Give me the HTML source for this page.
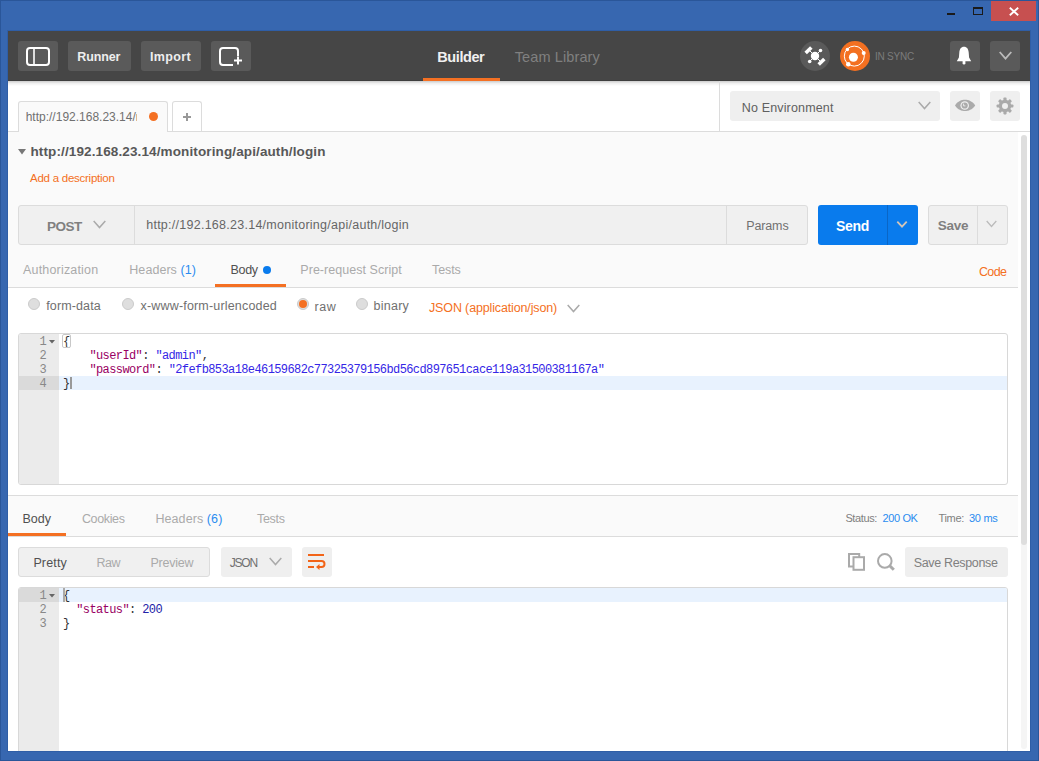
<!DOCTYPE html>
<html><head><meta charset="utf-8">
<style>
*{margin:0;padding:0;box-sizing:border-box}
html,body{width:1039px;height:761px;overflow:hidden;background:#3767b0;font-family:"Liberation Sans",sans-serif;position:relative}
.a{position:absolute}
.t{position:absolute;white-space:nowrap;line-height:1}
.mono{font-family:"Liberation Mono",monospace}
.tb{position:absolute;top:41px;height:30px;background:#5a5a5a;border-radius:3px}
.btn{position:absolute;background:#efefef;border-radius:3px}
.ln{position:absolute;background:#dcdcdc}
</style></head><body>
<div class="a" style="left:0;top:0;width:1039px;height:1px;background:#2a5699"></div>
<div class="a" style="left:0;top:0;width:1px;height:761px;background:#2a5699"></div>
<div class="a" style="left:1038px;top:0;width:1px;height:761px;background:#2a5699"></div>
<div class="a" style="left:7px;top:30px;width:1024px;height:722px;background:#2f5ea6"></div>
<div class="a" style="left:947px;top:13px;width:8px;height:2px;background:#1a1a1a"></div>
<div class="a" style="left:973px;top:7px;width:10px;height:8px;border:1px solid #1a1a1a;border-top-width:2px"></div>
<div class="a" style="left:991px;top:1px;width:45px;height:20px;background:#c75050"></div>
<svg class="a" style="left:1009px;top:7px" width="10" height="9" viewBox="0 0 10 9"><path d="M0.8 0.8L9.2 8.2M9.2 0.8L0.8 8.2" stroke="#fff" stroke-width="1.8"/></svg>
<div class="a" style="left:8px;top:31px;width:1022px;height:720px;background:#fff"></div>
<div class="a" style="left:8px;top:131px;width:1010px;height:156px;background:#fafafa"></div>
<div class="a" style="left:8px;top:495px;width:1010px;height:41px;background:#fafafa"></div>
<div class="a" style="left:8px;top:31px;width:1022px;height:50px;background:#464646"></div>
<div class="a" style="left:8px;top:80px;width:1022px;height:1px;background:#3e3e3e"></div>
<div class="a" style="left:8px;top:81px;width:1022px;height:5px;background:linear-gradient(rgba(0,0,0,0.2),rgba(0,0,0,0.06) 50%,rgba(0,0,0,0))"></div>
<div class="tb" style="left:18px;width:40px"></div>
<svg class="a" style="left:26px;top:47px" width="24" height="19" viewBox="0 0 24 19"><rect x="1" y="1" width="22" height="17" rx="3" fill="none" stroke="#fff" stroke-width="2"/><rect x="7" y="2" width="2" height="15" fill="#ddd"/></svg>
<div class="tb" style="left:68px;width:63px"></div>
<div class="tb" style="left:141px;width:60px"></div>
<div class="tb" style="left:211px;width:40px"></div>
<svg class="a" style="left:218px;top:46px" width="26" height="21" viewBox="0 0 26 21"><path d="M15 19H5a3 3 0 0 1-3-3V5a3 3 0 0 1 3-3h12a3 3 0 0 1 3 3v5" fill="none" stroke="#fff" stroke-width="2"/><path d="M16 14.5h8M20 10.5v8" stroke="#fff" stroke-width="2"/></svg>
<div class="a" style="left:423px;top:78px;width:77px;height:3px;background:#f47023"></div>
<div class="a" style="left:800px;top:41px;width:30px;height:30px;border-radius:50%;background:#5a5a5a"></div>
<svg class="a" style="left:800px;top:41px" width="30" height="30" viewBox="0 0 30 30">
<path d="M15 15L9 9M15 15L21 9M15 15L9 21M15 15L21 21" stroke="#fff" stroke-width="1"/>
<circle cx="15" cy="15" r="4.2" fill="#fff"/>
<rect x="4.5" y="7.5" width="8" height="3.5" fill="#fff" transform="rotate(-45 8.5 9.25)"/>
<rect x="17.5" y="19" width="8" height="3.5" fill="#fff" transform="rotate(-45 21.5 20.75)"/>
<circle cx="20.5" cy="9.5" r="1.8" fill="#fff"/>
<circle cx="9.7" cy="20.5" r="1.8" fill="#fff"/>
</svg>
<div class="a" style="left:840px;top:41px;width:30px;height:30px;border-radius:50%;background:#f37021"></div>
<svg class="a" style="left:840px;top:41px" width="30" height="30" viewBox="0 0 30 30">
<circle cx="14.3" cy="15.1" r="10" fill="none" stroke="#fff" stroke-width="1"/>
<circle cx="13.4" cy="16.2" r="4.5" fill="#fff"/>
<circle cx="7.4" cy="8.5" r="1.7" fill="#fff"/>
<circle cx="23.7" cy="12" r="2" fill="#fff"/>
<circle cx="8.3" cy="23.2" r="2.3" fill="#fff"/>
</svg>
<div class="tb" style="left:950px;width:30px"></div>
<svg class="a" style="left:956px;top:46px" width="16" height="19" viewBox="0 0 16 19"><path d="M8 0.8C5 0.8 3.6 3.2 3.3 6.5L2.9 11.6L0.8 15.2H15.2L13.1 11.6L12.7 6.5C12.4 3.2 11 0.8 8 0.8Z" fill="#fff"/><path d="M6.6 15h2.8v2.2a1.4 1.4 0 0 1-2.8 0z" fill="#fff"/></svg>
<div class="tb" style="left:990px;width:30px"></div>
<svg class="a" style="left:999px;top:51px" width="13" height="9" viewBox="0 0 13 9"><path d="M0.7 1L6.5 7.6L12.3 1" fill="none" stroke="#bbb" stroke-width="1.8"/></svg>
<div class="ln" style="left:8px;top:131px;width:1022px;height:1px"></div>
<div class="a" style="left:18px;top:101px;width:150px;height:31px;background:#fafafa;border:1px solid #dcdcdc;border-bottom:none;border-radius:3px 3px 0 0"></div>
<div class="a" style="left:149px;top:112px;width:9px;height:9px;border-radius:50%;background:#f47023"></div>
<div class="a" style="left:172px;top:101px;width:30px;height:30px;background:#fff;border:1px solid #dcdcdc;border-bottom:none;border-radius:3px 3px 0 0"></div>
<div class="ln" style="left:719px;top:81px;width:1px;height:50px"></div>
<div class="btn" style="left:730px;top:91px;width:210px;height:30px"></div>
<svg class="a" style="left:918px;top:101px" width="13" height="9" viewBox="0 0 13 9"><path d="M0.7 1L6.5 7.6L12.3 1" fill="none" stroke="#aaa" stroke-width="1.5"/></svg>
<div class="btn" style="left:950px;top:91px;width:30px;height:30px"></div>
<svg class="a" style="left:955px;top:99px" width="21" height="13" viewBox="0 0 21 13"><path d="M0 6.4C3 2 6.5 0.8 10 0.8S17 2 20.2 6.4C17 10.7 13.5 11.9 10 11.9S3 10.7 0 6.4Z" fill="#aaa"/><circle cx="9.7" cy="6.5" r="4.3" fill="#efefef"/><circle cx="9.7" cy="6.5" r="3.1" fill="#aaa"/><path d="M8.6 4.6V6.9H10.4" fill="none" stroke="#efefef" stroke-width="0.9"/></svg>
<div class="btn" style="left:990px;top:91px;width:30px;height:30px"></div>
<svg class="a" style="left:996px;top:97px" width="18" height="18" viewBox="0 0 18 18"><g fill="#aaa"><circle cx="9" cy="9" r="6.2"/><rect x="7.4" y="0.6" width="3.2" height="4.4" rx="0.8" transform="rotate(0 9 9)"/><rect x="7.4" y="0.6" width="3.2" height="4.4" rx="0.8" transform="rotate(45 9 9)"/><rect x="7.4" y="0.6" width="3.2" height="4.4" rx="0.8" transform="rotate(90 9 9)"/><rect x="7.4" y="0.6" width="3.2" height="4.4" rx="0.8" transform="rotate(135 9 9)"/><rect x="7.4" y="0.6" width="3.2" height="4.4" rx="0.8" transform="rotate(180 9 9)"/><rect x="7.4" y="0.6" width="3.2" height="4.4" rx="0.8" transform="rotate(225 9 9)"/><rect x="7.4" y="0.6" width="3.2" height="4.4" rx="0.8" transform="rotate(270 9 9)"/><rect x="7.4" y="0.6" width="3.2" height="4.4" rx="0.8" transform="rotate(315 9 9)"/></g><circle cx="9" cy="9" r="3" fill="#efefef"/></svg>
<div class="a" style="left:1021px;top:540px;width:6px;height:209px;border-radius:0 0 3px 3px;background:#f5f5f5"></div>
<div class="a" style="left:1021px;top:135px;width:6px;height:410px;border-radius:3px;background:#dedede"></div>
<svg class="a" style="left:18px;top:149px" width="8" height="6" viewBox="0 0 8 6"><path d="M0 0H8L4 5.5Z" fill="#777"/></svg>
<div class="a" style="left:18px;top:205px;width:790px;height:40px;background:#f0f0f0;border:1px solid #dcdcdc;border-radius:3px"></div>
<div class="ln" style="left:134px;top:206px;width:1px;height:38px"></div>
<div class="ln" style="left:726px;top:206px;width:1px;height:38px"></div>
<svg class="a" style="left:93px;top:220px" width="13" height="9" viewBox="0 0 13 9"><path d="M0.7 1L6.5 7.6L12.3 1" fill="none" stroke="#aaa" stroke-width="1.5"/></svg>
<div class="a" style="left:818px;top:205px;width:100px;height:40px;background:#097bed;border-radius:3px"></div>
<div class="a" style="left:887px;top:205px;width:1px;height:40px;background:#0a66c6"></div>
<svg class="a" style="left:896px;top:220px" width="12" height="9" viewBox="0 0 12 9"><path d="M1.3 1.6L6 6.6L10.7 1.6" fill="none" stroke="#d2c5b8" stroke-width="1.8"/></svg>
<div class="a" style="left:928px;top:205px;width:80px;height:40px;background:#f0f0f0;border:1px solid #dcdcdc;border-radius:3px"></div>
<div class="ln" style="left:977px;top:206px;width:1px;height:38px"></div>
<svg class="a" style="left:986px;top:220px" width="11" height="8" viewBox="0 0 11 8"><path d="M0.7 1L5.5 6.5L10.3 1" fill="none" stroke="#bbb" stroke-width="1.3"/></svg>
<div class="a" style="left:263px;top:266px;width:8px;height:8px;border-radius:50%;background:#097bed"></div>
<div class="a" style="left:215px;top:284px;width:71px;height:3px;background:#f47023"></div>
<div class="ln" style="left:8px;top:287px;width:1010px;height:1px"></div>
<div class="a" style="left:28px;top:298px;width:12px;height:12px;border-radius:50%;background:#dedede;border:1px solid #cbcbcb"></div>
<div class="a" style="left:122px;top:298px;width:12px;height:12px;border-radius:50%;background:#dedede;border:1px solid #cbcbcb"></div>
<div class="a" style="left:297px;top:298px;width:12px;height:12px;border-radius:50%;background:#dedede;border:1px solid #cbcbcb"></div>
<div class="a" style="left:299px;top:300px;width:8px;height:8px;border-radius:50%;background:#f47023"></div>
<div class="a" style="left:356px;top:298px;width:12px;height:12px;border-radius:50%;background:#dedede;border:1px solid #cbcbcb"></div>
<svg class="a" style="left:567px;top:304px" width="13" height="9" viewBox="0 0 13 9"><path d="M0.7 1L6.5 7.6L12.3 1" fill="none" stroke="#aaa" stroke-width="1.5"/></svg>
<div class="a" style="left:18px;top:333px;width:990px;height:152px;border:1px solid #d8d8d8;border-radius:3px;background:#fff;overflow:hidden">
  <div class="a" style="left:0;top:0;width:40px;height:150px;background:#ebebeb"></div>
  <div class="a" style="left:0;top:42px;width:40px;height:14px;background:#dadada"></div>
  <div class="a" style="left:40px;top:42px;width:948px;height:14px;background:#e8f2fe"></div>
</div>
<div class="a mono" style="left:19px;top:334.5px;width:40px;font-size:12px;line-height:14px;color:#888;text-align:right;padding-right:13px;letter-spacing:-0.6px">1<br>2<br>3<br>4</div>
<svg class="a" style="left:49px;top:340px" width="6" height="4" viewBox="0 0 6 4"><path d="M0 0H6L3 3.5Z" fill="#666"/></svg>
<div class="a mono" style="left:63px;top:334.5px;font-size:12px;line-height:14px;color:#333;white-space:pre;letter-spacing:-0.6px">{
    <span style="color:#990063">"userId"</span>: <span style="color:#3426e6">"admin"</span>,
    <span style="color:#990063">"password"</span>: <span style="color:#3426e6">"2fefb853a18e46159682c77325379156bd56cd897651cace119a31500381167a"</span>
}</div>
<div class="a" style="left:62px;top:334px;width:9px;height:14px;border:1px solid #c8c8c8;border-radius:2px"></div>
<div class="a" style="left:70px;top:377px;width:2px;height:12px;background:#999"></div>
<div class="ln" style="left:8px;top:495px;width:1010px;height:1px"></div>
<div class="a" style="left:8px;top:533px;width:58px;height:3px;background:#f47023"></div>
<div class="ln" style="left:8px;top:536px;width:1010px;height:1px"></div>
<div class="a" style="left:18px;top:547px;width:192px;height:30px;background:#f0f0f0;border:1px solid #dcdcdc;border-radius:3px"></div>
<div class="btn" style="left:221px;top:547px;width:71px;height:30px"></div>
<svg class="a" style="left:269px;top:557px" width="13" height="9" viewBox="0 0 13 9"><path d="M0.7 1L6.5 7.6L12.3 1" fill="none" stroke="#aaa" stroke-width="1.5"/></svg>
<div class="btn" style="left:302px;top:547px;width:30px;height:30px"></div>
<svg class="a" style="left:302px;top:547px" width="30" height="30" viewBox="0 0 30 30"><g fill="none" stroke="#f26418" stroke-width="2"><path d="M6 8H22M6 14H19.5a3 3 0 0 1 0 6H16M6 20H12"/></g><path d="M14 20L17.5 17V23Z" fill="#f26418"/></svg>
<svg class="a" style="left:847px;top:552px" width="20" height="20" viewBox="0 0 20 20"><rect x="2" y="2" width="10.2" height="12.5" fill="none" stroke="#aaa" stroke-width="2"/><rect x="6.5" y="5.2" width="10.5" height="12.6" fill="#fff" stroke="#aaa" stroke-width="2"/></svg>
<svg class="a" style="left:875px;top:551px" width="22" height="22" viewBox="0 0 22 22"><circle cx="9.8" cy="9.9" r="6.8" fill="none" stroke="#aaa" stroke-width="2"/><path d="M14.5 14.5L18.8 18.8" stroke="#aaa" stroke-width="3"/></svg>
<div class="btn" style="left:905px;top:547px;width:103px;height:30px"></div>
<div class="a" style="left:18px;top:587px;width:990px;height:170px;border:1px solid #d8d8d8;border-radius:3px;background:#fff;overflow:hidden">
  <div class="a" style="left:0;top:0;width:40px;height:170px;background:#ebebeb"></div>
  <div class="a" style="left:0;top:0;width:40px;height:14px;background:#dadada"></div>
  <div class="a" style="left:40px;top:0;width:948px;height:14px;background:#e8f2fe"></div>
</div>
<div class="a mono" style="left:19px;top:588.5px;width:40px;font-size:12px;line-height:14px;color:#888;text-align:right;padding-right:13px;letter-spacing:-0.6px">1<br>2<br>3</div>
<svg class="a" style="left:49px;top:594px" width="6" height="4" viewBox="0 0 6 4"><path d="M0 0H6L3 3.5Z" fill="#666"/></svg>
<div class="a mono" style="left:63px;top:588.5px;font-size:12px;line-height:14px;color:#333;white-space:pre;letter-spacing:-0.6px">{
  <span style="color:#990063">"status"</span>: <span style="color:#2222a8">200</span>
}</div>
<div class="a" style="left:63px;top:588px;width:1.5px;height:14px;background:#aaa"></div>
<div class="t" style="left:77.30px;top:51.42px;font-size:12.5px;color:#eee;font-weight:700;letter-spacing:-0.14px;">Runner</div>
<div class="t" style="left:149.90px;top:51.42px;font-size:12.5px;color:#eee;font-weight:700;letter-spacing:0.4px;">Import</div>
<div class="t" style="left:437.30px;top:50.03px;font-size:14.5px;color:#f0f0f0;font-weight:700;letter-spacing:-0.42px;">Builder</div>
<div class="t" style="left:514.70px;top:50.03px;font-size:14.5px;color:#808080;letter-spacing:0.12px;">Team Library</div>
<div class="t" style="left:875.00px;top:51.53px;font-size:10px;color:#7c7c7c;letter-spacing:-0.23px;">IN SYNC</div>
<div class="t" style="left:25.70px;top:110.84px;font-size:12px;color:#707070;width:111px;overflow:hidden">http://192.168.23.14/monitoring</div>
<svg class="a" style="left:183px;top:113px" width="8" height="8" viewBox="0 0 8 8"><path d="M0 4H8M4 0V8" stroke="#999" stroke-width="2"/></svg>
<div class="t" style="left:741.80px;top:102.42px;font-size:12.5px;color:#606060;letter-spacing:0.15px;">No Environment</div>
<div class="t" style="left:30.50px;top:144.57px;font-size:13.5px;color:#585858;font-weight:700;letter-spacing:0.12px;">http://192.168.23.14/monitoring/api/auth/login</div>
<div class="t" style="left:30.00px;top:173.27px;font-size:11.5px;color:#f47023;letter-spacing:-0.25px;">Add a description</div>
<div class="t" style="left:46.90px;top:219.57px;font-size:13.5px;color:#808080;font-weight:700;letter-spacing:-0.5px;">POST</div>
<div class="t" style="left:146.20px;top:219.02px;font-size:12.5px;color:#666;letter-spacing:0.26px;">http://192.168.23.14/monitoring/api/auth/login</div>
<div class="t" style="left:746.20px;top:220.02px;font-size:12.5px;color:#707070;letter-spacing:-0.12px;">Params</div>
<div class="t" style="left:835.90px;top:218.65px;font-size:14px;color:#fff;font-weight:700;letter-spacing:-0.3px;">Send</div>
<div class="t" style="left:937.70px;top:219.27px;font-size:13.5px;color:#808080;font-weight:700;letter-spacing:-0.23px;">Save</div>
<div class="t" style="left:23.10px;top:263.67px;font-size:12.5px;color:#aaa;letter-spacing:0.17px;">Authorization</div>
<div class="t" style="left:129.30px;top:263.67px;font-size:12.5px;color:#aaa;letter-spacing:0.05px;">Headers <span style="color:#2a8cf0">(1)</span></div>
<div class="t" style="left:230.50px;top:263.67px;font-size:12.5px;color:#505050;letter-spacing:-0.33px;">Body</div>
<div class="t" style="left:300.30px;top:263.67px;font-size:12.5px;color:#aaa;letter-spacing:0.04px;">Pre-request Script</div>
<div class="t" style="left:432.00px;top:263.67px;font-size:12.5px;color:#aaa;letter-spacing:-0.08px;">Tests</div>
<div class="t" style="left:979.00px;top:265.72px;font-size:12.5px;color:#f47023;letter-spacing:-0.67px;">Code</div>
<div class="t" style="left:46.25px;top:300.42px;font-size:12.5px;color:#707070;letter-spacing:0.12px;">form-data</div>
<div class="t" style="left:140.50px;top:300.42px;font-size:12.5px;color:#707070;letter-spacing:0.18px;">x-www-form-urlencoded</div>
<div class="t" style="left:314.40px;top:300.62px;font-size:12.5px;color:#707070;letter-spacing:0.65px;">raw</div>
<div class="t" style="left:373.50px;top:300.42px;font-size:12.5px;color:#707070;letter-spacing:0.26px;">binary</div>
<div class="t" style="left:429.00px;top:302.42px;font-size:12.5px;color:#f47023;letter-spacing:-0.14px;">JSON (application/json)</div>
<div class="t" style="left:22.50px;top:513.42px;font-size:12.5px;color:#505050;">Body</div>
<div class="t" style="left:81.90px;top:513.42px;font-size:12.5px;color:#aaa;letter-spacing:-0.36px;">Cookies</div>
<div class="t" style="left:155.40px;top:513.42px;font-size:12.5px;color:#aaa;letter-spacing:0.09px;">Headers <span style="color:#2a8cf0">(6)</span></div>
<div class="t" style="left:257.00px;top:513.42px;font-size:12.5px;color:#aaa;letter-spacing:-0.31px;">Tests</div>
<div class="t" style="left:845.40px;top:512.79px;font-size:11px;color:#808080;letter-spacing:-0.37px;">Status:</div>
<div class="t" style="left:882.50px;top:512.79px;font-size:11px;color:#2a8cf0;letter-spacing:-0.38px;">200 OK</div>
<div class="t" style="left:938.40px;top:512.79px;font-size:11px;color:#808080;letter-spacing:-0.3px;">Time:</div>
<div class="t" style="left:969.00px;top:512.79px;font-size:11px;color:#2a8cf0;letter-spacing:-0.28px;">30 ms</div>
<div class="t" style="left:33.40px;top:557.22px;font-size:12.5px;color:#505050;letter-spacing:0.14px;">Pretty</div>
<div class="t" style="left:96.50px;top:557.22px;font-size:12.5px;color:#aaa;letter-spacing:-0.45px;">Raw</div>
<div class="t" style="left:150.40px;top:557.22px;font-size:12.5px;color:#aaa;letter-spacing:-0.2px;">Preview</div>
<div class="t" style="left:229.70px;top:557.34px;font-size:12px;color:#707070;letter-spacing:-1.2px;">JSON</div>
<div class="t" style="left:913.70px;top:557.22px;font-size:12.5px;color:#808080;letter-spacing:-0.33px;">Save Response</div>
<div class="a" style="left:7px;top:751px;width:1024px;height:10px;background:#3767b0"></div>
<div class="a" style="left:7px;top:751px;width:1024px;height:1px;background:#2f5ea6"></div>
<div class="a" style="left:0;top:760px;width:1039px;height:1px;background:#2a5699"></div>
</body></html>
